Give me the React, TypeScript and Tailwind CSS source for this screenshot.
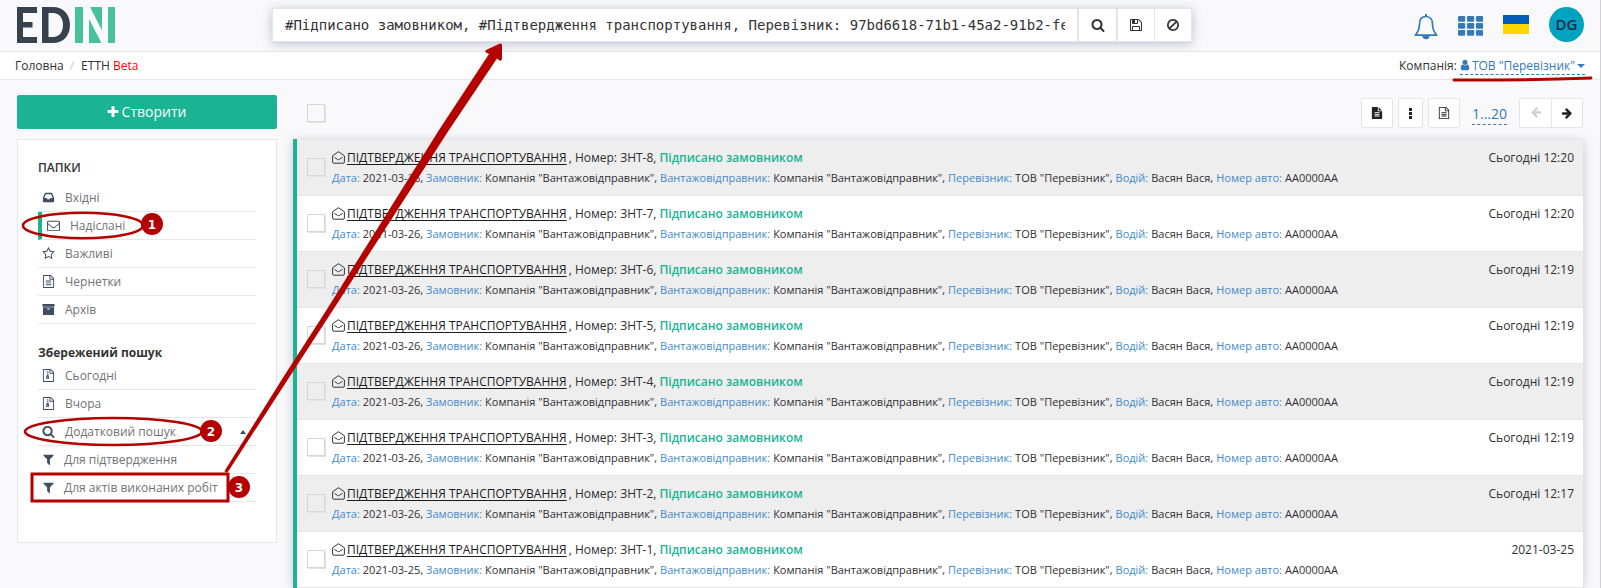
import type { ReactNode } from "react";

const PATHS = {
  search:
    "M1216 832q0-185-131.5-316.5t-316.5-131.5-316.5 131.5-131.5 316.5 131.5 316.5 316.5 131.5 316.5-131.5 131.5-316.5zm512 832q0 52-38 90t-90 38q-54 0-90-38l-343-342q-179 124-399 124-143 0-273.5-55.5t-225-150-150-225-55.5-273.5 55.5-273.5 150-225 225-150 273.5-55.5 273.5 55.5 225 150 150 225 55.5 273.5q0 220-124 399l343 343q37 37 37 90z",
  save:
    "M512 1536h768v-384h-768v384zm896 0h128v-896q0-14-10-38.5t-20-34.5l-281-281q-10-10-34-20t-39-10v416q0 40-28 68t-68 28h-576q-40 0-68-28t-28-68v-416h-128v1280h128v-416q0-40 28-68t68-28h832q40 0 68 28t28 68v416zm-384-928v-320q0-13-9.5-22.5t-22.5-9.5h-192q-13 0-22.5 9.5t-9.5 22.5v320q0 13 9.5 22.5t22.5 9.5h192q13 0 22.5-9.5t9.5-22.5zm640 32v928q0 40-28 68t-68 28h-1344q-40 0-68-28t-28-68v-1344q0-40 28-68t68-28h928q40 0 88 20t76 48l280 280q28 28 48 76t20 88z",
  ban:
    "M1440 893q0-161-87-295l-754 753q137 89 297 89 111 0 211.5-43.5t173.5-116.5 116-174.5 43-212.5zm-999 299l755-754q-135-91-300-91-148 0-273 73t-198 199-73 274q0 162 89 299zm1223-299q0 157-61 300t-163.5 246-245 164-298.5 61-298.5-61-245-164-163.5-246-61-300 61-299.5 163.5-245.5 245-164 298.5-61 298.5 61 245 164 163.5 245.5 61 299.5z",
  plus:
    "M1600 736v192q0 40-28 68t-68 28h-416v416q0 40-28 68t-68 28h-192q-40 0-68-28t-28-68v-416h-416q-40 0-68-28t-28-68v-192q0-40 28-68t68-28h416v-416q0-40 28-68t68-28h192q40 0 68 28t28 68v416h416q40 0 68 28t28 68z",
  mail:
    "M1664 1504v-768q-32 36-69 66-268 206-426 338-51 43-83 67t-86.5 48.5-102.5 24.5h-2q-48 0-102.5-24.5t-86.5-48.5-83-67q-158-132-426-338-37-30-69-66v768q0 13 9.5 22.5t22.5 9.5h1472q13 0 22.5-9.5t9.5-22.5zm0-1051v-24.5l-.5-13-3-12.5-5.5-9-9-7.5-14-2.5h-1472q-13 0-22.5 9.5t-9.5 22.5q0 168 147 284 193 152 401 317 6 5 35 29.5t46 37.5 44.5 31.5 50.5 27.5 43 9h2q20 0 43-9t50.5-27.5 44.5-31.5 46-37.5 35-29.5q208-165 401-317 54-43 100.5-115.5t46.5-131.5zm128-37v1088q0 66-47 113t-113 47h-1472q-66 0-113-47t-47-113v-1088q0-66 47-113t113-47h1472q66 0 113 47t47 113z",
  star:
    "M1201 1004l306-297-422-62-189-382-189 382-422 62 306 297-73 421 378-199 377 199zm527-357q0 22-26 48l-363 354 86 500q1 7 1 20 0 50-41 50-19 0-40-12l-449-236-449 236q-22 12-40 12-21 0-31.5-14.5t-10.5-35.5q0-6 2-20l86-500-364-354q-25-27-25-48 0-37 56-46l502-73 225-455q19-41 49-41t49 41l225 455 502 73q56 9 56 46z",
  doc:
    "M1596 380q28 28 48 76t20 88v1152q0 40-28 68t-68 28h-1344q-40 0-68-28t-28-68v-1600q0-40 28-68t68-28h896q40 0 88 20t76 48zm-444-244v376h376q-10-29-22-41l-313-313q-12-12-41-22zm384 1528v-1024h-416q-40 0-68-28t-28-68v-416h-768v1536h1280zm-1024-864q0-14 9-23t23-9h704q14 0 23 9t9 23v64q0 14-9 23t-23 9h-704q-14 0-23-9t-9-23v-64zm736 224q14 0 23 9t9 23v64q0 14-9 23t-23 9h-704q-14 0-23-9t-9-23v-64q0-14 9-23t23-9h704zm0 256q14 0 23 9t9 23v64q0 14-9 23t-23 9h-704q-14 0-23-9t-9-23v-64q0-14 9-23t23-9h704z",
  docFilled:
    "M1596 476q14 14 28 36h-472v-472q22 14 36 28zm-476 164h544v1056q0 40-28 68t-68 28h-1344q-40 0-68-28t-28-68v-1600q0-40 28-68t68-28h800v544q0 40 28 68t68 28zm160 736v-64q0-14-9-23t-23-9h-704q-14 0-23 9t-9 23v64q0 14 9 23t23 9h704q14 0 23-9t9-23zm0-256v-64q0-14-9-23t-23-9h-704q-14 0-23 9t-9 23v64q0 14 9 23t23 9h704q14 0 23-9t9-23zm0-256v-64q0-14-9-23t-23-9h-704q-14 0-23 9t-9 23v64q0 14 9 23t23 9h704q14 0 23-9t9-23z",
  zip:
    "M1596 380q28 28 48 76t20 88v1152q0 40-28 68t-68 28h-1344q-40 0-68-28t-28-68v-1600q0-40 28-68t68-28h896q40 0 88 20t76 48zm-444-244v376h376q-10-29-22-41l-313-313q-12-12-41-22zm384 1528v-1024h-416q-40 0-68-28t-28-68v-416h-768v1536h1280zM640 256h128v128h-128zM768 384h128v128h-128zM640 512h128v128h-128zM768 640h128v128h-128zM680 800h200l110 400q10 180-222 190-232-10-222-190zM768 1150q-110 0-110 65t110 65 110-65-110-65z",
  filter:
    "M1595 295q17 41-14 70l-493 493v742q0 42-39 59-13 5-25 5-27 0-45-19l-256-256q-19-19-19-45v-486l-493-493q-31-29-14-70 17-39 59-39h1280q42 0 59 39z",
  inbox:
    "M1151 960h316q-1-3-2.5-8t-2.5-8l-212-496h-708l-212 496q-1 2-2.5 8t-2.5 8h316l95 192h320zm513 30v482q0 26-19 45t-45 19h-1408q-26 0-45-19t-19-45v-482q0-62 25-123l238-552q10-25 36.5-42t52.5-17h832q26 0 52.5 17t36.5 42l238 552q25 61 25 123z",
  archive:
    "M1088 832q0-26-19-45t-45-19h-256q-26 0-45 19t-19 45 19 45 45 19h256q26 0 45-19t19-45zm576-192v960q0 26-19 45t-45 19h-1408q-26 0-45-19t-19-45v-960q0-26 19-45t45-19h1408q26 0 45 19t19 45zm64-448v256q0 26-19 45t-45 19h-1536q-26 0-45-19t-19-45v-256q0-26 19-45t45-19h1536q26 0 45 19t19 45z",
  user:
    "M1536 1399q0 109-62.5 187t-150.5 78h-854q-88 0-150.5-78t-62.5-187q0-85 8.5-160.5t31.5-152 58.5-131 94-89 134.5-34.5q131 128 313 128t313-128q76 0 134.5 34.5t94 89 58.5 131 31.5 152 8.5 160.5zm-256-887q0 159-112.5 271.5t-271.5 112.5-271.5-112.5-112.5-271.5 112.5-271.5 271.5-112.5 271.5 112.5 112.5 271.5z",
  right:
    "M1600 960q0 54-37 91l-651 651q-39 37-91 37-51 0-90-37l-75-75q-38-38-38-91t38-91l293-293h-704q-52 0-84.5-37.5t-32.5-90.5v-128q0-53 32.5-90.5t84.5-37.5h704l-293-294q-38-36-38-90t38-90l75-75q38-38 90-38 53 0 91 38l651 651q37 35 37 90z",
};

type IconName = keyof typeof PATHS;

function Icon({ name, className = "size-[13px]" }: { name: IconName; className?: string }) {
  return (
    <svg viewBox="0 0 1792 1792" fill="currentColor" fillRule="evenodd" className={`shrink-0 overflow-visible ${className}`}>
      <path d={PATHS[name]} />
    </svg>
  );
}

function Logo() {
  return (
    <svg width="99" height="36" viewBox="0 0 99 36" className="shrink-0">
      <path fill="#38424f" d="M0 0h20v6H6v9h9.500v5.500H6V30h14v6H0z" />
      <path fill="#38424f" fillRule="evenodd" d="M25 0h11c10 0 17 7 17 18s-7 18-17 18H25zM31.500 6v24H36c6.500 0 10-5 10-12S42.500 6 36 6z" />
      <path fill="#47c19a" d="M58 0h8v36h-8zM91 0h7v36h-7zM73 0h12v23.500zM72 12l12.500 24H72z" />
    </svg>
  );
}

function Header() {
  return (
    <header className="flex h-[52px] shrink-0 border-b border-[#e7e7ea] pl-[17px] pr-4">
      <div className="w-[255px] pt-[7px]">
        <Logo />
      </div>
      <div className="mt-2 flex h-[34px] w-[920px] border border-[#e3e4ea] bg-white text-[#333] shadow-[0_2px_10px_rgba(120,125,160,0.45)]">
        <div className="w-[806px] border-r-2 border-[#e3e4e8] px-3 leading-8">
          <div className="overflow-hidden whitespace-nowrap font-['DejaVu_Sans_Mono',monospace] text-sm leading-8">
            #Підписано замовником, #Підтвердження транспортування, Перевізник: 97bd6618-71b1-45a2-91b2-fe
          </div>
        </div>
        <div className="flex w-[39px] items-center justify-center border-r-2 border-[#e3e4e8]">
          <Icon name="search" className="size-[14px]" />
        </div>
        <div className="flex w-[37px] items-center justify-center border-r border-[#e3e4e8]">
          <Icon name="save" className="size-[14px]" />
        </div>
        <div className="flex flex-1 items-center justify-center">
          <Icon name="ban" className="size-[14px]" />
        </div>
      </div>
      <div className="ml-auto flex pt-[7px] text-[#337ab7]">
        <svg width="24" height="26" viewBox="0 0 24 26" className="mt-[7px]" fill="none" stroke="currentColor" strokeWidth="1.700">
          <path strokeLinejoin="round" d="M12 2.500c-4.500 0-6.500 3.300-6.500 7.500 0 5.500-1.500 8.200-4.200 11.200h21.400c-2.700-3-4.200-5.700-4.200-11.200 0-4.200-2-7.500-6.500-7.500z" />
          <path d="M12 0v3" strokeWidth="2" />
          <path d="M8.300 21.500a3.700 3.700 0 0 0 7.400 0z" fill="currentColor" stroke="none" />
        </svg>
        <svg width="25" height="20" viewBox="0 0 25 20" className="ml-5 mt-[9px]" fill="currentColor">
          {[0, 7, 14].map((y) =>
            [0, 9, 18].map((x) => <rect key={`${x}-${y}`} x={x} y={y} width="7.200" height="5.800" rx="1.200" />),
          )}
        </svg>
        <div className="ml-5 mt-2 h-[19px] w-[26px] bg-[#ffd700]">
          <div className="h-[9px] bg-[#005bbb]" />
        </div>
        <div className="ml-5 flex size-[35px] items-center justify-center rounded-full bg-[#00a3bf] text-[15px] font-semibold text-[#172b4d]">
          DG
        </div>
      </div>
    </header>
  );
}

function Breadcrumbs() {
  return (
    <div className="flex h-7 shrink-0 items-start border-b border-[#e7e7ea] bg-white pl-[15px] pr-[15px] leading-[27px]">
      <span>Головна</span>
      <span className="ml-[6px] text-[#ccc]">/</span>
      <span className="ml-[7px]">
        ЕТТН <span className="text-[#f00]">Beta</span>
      </span>
      <div className="ml-auto flex text-[#337ab7]">
        <span className="mr-[3px] text-[#333]">Компанія:</span>
        <span className="flex h-[23px] items-start border-b border-dashed border-[#337ab7] leading-[27px]">
          <Icon name="user" className="-ml-px mt-[7px] size-[12px]" />
          <span className="ml-px">ТОВ "Перевізник"</span>
          <svg width="8" height="4" viewBox="0 0 8 4" className="ml-[2px] mt-3" fill="currentColor">
            <path d="M0 0h8L4 4z" />
          </svg>
        </span>
      </div>
    </div>
  );
}

type FolderProps = { icon: IconName; label: string; active?: boolean; caret?: boolean; gap?: string };

function Folder({ icon, label, active, caret, gap = "gap-[10px]" }: FolderProps) {
  return (
    <li
      className={`flex h-7 items-center border-b border-[#e7e7ea] text-[#6f7377] ${gap} ${
        active ? "border-l-4 border-l-[#1ab394] pl-[5px]" : "pl-1"
      }`}
    >
      <Icon name={icon} className="size-[13px] text-[#3e4d60]" />
      {label}
      {caret && (
        <svg width="6" height="4" viewBox="0 0 6 4" className="ml-auto mr-[10px]">
          <path d="M0 4h6L3 0z" fill="#3e4d60" />
        </svg>
      )}
    </li>
  );
}

function Sidebar() {
  return (
    <aside className="flex w-[260px] shrink-0 flex-col gap-[10px]">
      <button className="flex h-[34px] items-center justify-center gap-[2px] rounded-[2px] bg-[#1ab394] pr-[2px] text-sm text-white">
        <Icon name="plus" className="size-[14px]" />
        Створити
      </button>
      <nav className="h-[404px] border border-[#e4e6f0] bg-white px-5 pt-[18px]">
        <h2 className="h-[26px] font-semibold leading-5 text-[#333]">ПАПКИ</h2>
        <ul>
          <Folder icon="inbox" label="Вхідні" />
          <Folder icon="mail" label="Надіслані" active />
          <Folder icon="star" label="Важливі" />
          <Folder icon="doc" label="Чернетки" />
          <Folder icon="archive" label="Архів" />
        </ul>
        <h2 className="mt-[19px] h-[19px] font-bold leading-5 text-[#333]">Збережений пошук</h2>
        <ul>
          <Folder icon="zip" label="Сьогодні" />
          <Folder icon="zip" label="Вчора" />
          <Folder icon="search" label="Додатковий пошук" caret />
          <Folder icon="filter" label="Для підтвердження" gap="gap-[9px]" />
          <Folder icon="filter" label="Для актів виконаних робіт" gap="gap-[9px]" />
        </ul>
      </nav>
    </aside>
  );
}

function ToolButton({ children, className }: { children: ReactNode; className: string }) {
  return (
    <div className={`flex h-[30px] items-center justify-center border border-[#e4e5ea] bg-white text-[#222] ${className}`}>
      {children}
    </div>
  );
}

function Toolbar() {
  return (
    <div className="flex h-[44px] pl-[14px]">
      <span className="mt-[9px] size-[18px] border border-[#d6d6d4] shadow-[1px_1px_0_#e4e4e0]" />
      <div className="ml-auto flex pt-[3px]">
        <ToolButton className="w-8 rounded-[2px]">
          <Icon name="docFilled" className="size-[12px]" />
        </ToolButton>
        <ToolButton className="ml-[5px] w-[25px] rounded-[2px]">
          <svg width="3" height="11" fill="currentColor">
            <path d="M0 0h3v3H0zM0 4h3v3H0zM0 8h3v3H0z" />
          </svg>
        </ToolButton>
        <ToolButton className="ml-[5px] w-8 rounded-[2px]">
          <Icon name="doc" className="size-[12px]" />
        </ToolButton>
        <span className="ml-3 mr-3 flex h-[27px] w-[35px] items-center justify-center border-b border-dashed border-[#337ab7] pt-[6px] text-sm text-[#337ab7]">
          1...20
        </span>
        <ToolButton className="w-[33px] rounded-l-[2px] bg-[#fbfbfc]">
          <Icon name="right" className="size-[12px] rotate-180 text-[#d2d2d2]" />
        </ToolButton>
        <ToolButton className="-ml-px w-8 rounded-r-[2px]">
          <Icon name="right" className="size-[12px]" />
        </ToolButton>
      </div>
    </div>
  );
}

type Doc = { number: string; date: string; time: string };

const DOCS: Doc[] = [
  { number: "ЗНТ-8", date: "2021-03-26", time: "Сьогодні 12:20" },
  { number: "ЗНТ-7", date: "2021-03-26", time: "Сьогодні 12:20" },
  { number: "ЗНТ-6", date: "2021-03-26", time: "Сьогодні 12:19" },
  { number: "ЗНТ-5", date: "2021-03-26", time: "Сьогодні 12:19" },
  { number: "ЗНТ-4", date: "2021-03-26", time: "Сьогодні 12:19" },
  { number: "ЗНТ-3", date: "2021-03-26", time: "Сьогодні 12:19" },
  { number: "ЗНТ-2", date: "2021-03-26", time: "Сьогодні 12:17" },
  { number: "ЗНТ-1", date: "2021-03-25", time: "2021-03-25" },
];

function Field({ name, value }: { name: string; value: string }) {
  return (
    <>
      <span className="text-[#428bca]">{name}:</span> {value}
    </>
  );
}

function Row({ doc }: { doc: Doc }) {
  return (
    <li className="flex h-14 shrink-0 border-b border-[#e7e7e7] bg-white pl-[10px] pr-[9px] odd:bg-[#eee]">
      <span className="mt-[18px] size-[18px] shrink-0 border border-[#d6d6d2] shadow-[1px_1px_0_#e2e2de]" />
      <div className="ml-[7px] min-w-0 flex-1 whitespace-nowrap pt-[8px]">
        <div className="flex leading-5">
          <svg width="13" height="13" viewBox="0 0 13 13" className="mr-[2px] mt-[3px] shrink-0" fill="none" stroke="#333">
            <path d="M.6 4.800 6.500.7l5.900 4.100v6.100q0 1.300-1.300 1.300H1.900Q.6 12.200.6 10.900z" />
            <path d="M2.500 6.300 5.500 8.400q1 .6 2 0l3-2.100" />
          </svg>
          <span className="pr-px text-[#1c1c1f] underline decoration-1 underline-offset-2 [text-decoration-skip-ink:none]">
            ПІДТВЕРДЖЕННЯ ТРАНСПОРТУВАННЯ
          </span>
          <span className="ml-px">, Номер: {doc.number},</span>
          <span className="ml-[3px] font-semibold text-[#1ab394]">Підписано замовником</span>
          <span className="ml-auto">{doc.time}</span>
        </div>
        <div className="text-[11px] leading-[19px] [word-spacing:0.12px]">
          <Field name="Дата" value={doc.date} />, <Field name="Замовник" value={'Компанія "Вантажовідправник"'} />,{" "}
          <Field name="Вантажовідправник" value={'Компанія "Вантажовідправник"'} />,{" "}
          <Field name="Перевізник" value={'ТОВ "Перевізник"'} />, <Field name="Водій" value="Васян Вася" />,{" "}
          <Field name="Номер авто" value="АА0000АА" />
        </div>
      </div>
    </li>
  );
}

function Annotations() {
  return (
    <svg width="1601" height="588" viewBox="0 0 1601 588" className="pointer-events-none absolute left-0 top-0" fill="none" stroke="#b50000">
      <ellipse cx="83" cy="225.500" rx="60" ry="12.800" strokeWidth="2.600" />
      <ellipse cx="113.500" cy="431.500" rx="88.500" ry="13.500" strokeWidth="2.600" />
      <rect x="32" y="474" width="196" height="27" strokeWidth="3" />
      <path d="M1454 80q70 .5 137-2" strokeWidth="3" strokeLinecap="round" />
      <path
        d="M224.500 471 L281.500 380 L326.500 310 L439 130 L489 54 L486 52.500 Q484 51 487 49.500 L500 43.500 Q502 43 502 45 L502 59 Q501 62 499 60 L497 58.500 L449 130 L333 310 L287.500 380 L228.500 471 Q226 474 224.500 471z"
        fill="#b50000"
        stroke="none"
      />
      <g stroke="none" fill="#b50000" className="font-['DejaVu_Sans',sans-serif] text-[12px] font-bold">
        <circle cx="152" cy="224" r="11" />
        <circle cx="211" cy="431" r="11" />
        <circle cx="239" cy="487" r="11" />
        <text x="152" y="229" textAnchor="middle" fill="#fff">1</text>
        <text x="211" y="436" textAnchor="middle" fill="#fff">2</text>
        <text x="239" y="492" textAnchor="middle" fill="#fff">3</text>
      </g>
    </svg>
  );
}

export default function App() {
  return (
    <div className="relative flex h-[588px] w-[1601px] flex-col overflow-hidden border-r border-[#d0d0d2] bg-[#f9f9fb] font-['Open_Sans',sans-serif] text-[12px] text-[#2f2f33]">
      <Header />
      <Breadcrumbs />
      <main className="flex min-h-0 flex-1 gap-4 pl-[17px] pr-[17px] pt-[15px]">
        <Sidebar />
        <section className="min-w-0 flex-1">
          <Toolbar />
          <ul className="flex flex-col border-l-4 border-[#1ab394] bg-[#e7e7e7] pt-px shadow-[0_2px_10px_rgba(120,125,160,0.4)]">
            {DOCS.map((doc) => (
              <Row key={doc.number} doc={doc} />
            ))}
          </ul>
        </section>
      </main>
      <Annotations />
    </div>
  );
}
